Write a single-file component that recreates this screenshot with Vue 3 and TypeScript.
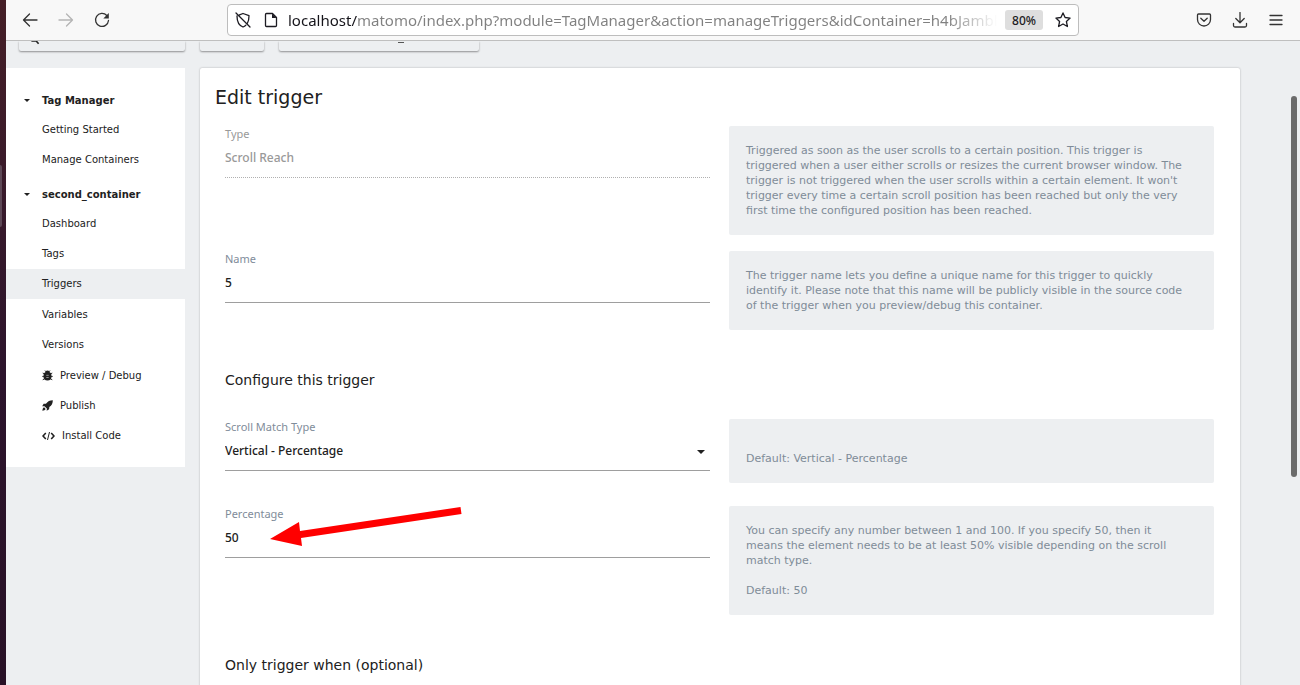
<script setup lang="ts">
import { ref } from 'vue'

interface MenuItem {
  label: string
  icon?: 'bug' | 'rocket' | 'code'
  active?: boolean
}

interface MenuGroup {
  title: string
  items: MenuItem[]
}

const groups: MenuGroup[] = [
  { title: 'Tag Manager', items: [{ label: 'Getting Started' }, { label: 'Manage Containers' }] },
  {
    title: 'second_container',
    items: [
      { label: 'Dashboard' },
      { label: 'Tags' },
      { label: 'Triggers', active: true },
      { label: 'Variables' },
      { label: 'Versions' },
      { label: 'Preview / Debug', icon: 'bug' },
      { label: 'Publish', icon: 'rocket' },
      { label: 'Install Code', icon: 'code' },
    ],
  },
]

const url = ref('localhost/matomo/index.php?module=TagManager&action=manageTriggers&idContainer=h4bJambk&')
const type = ref('Scroll Reach')
const name = ref('5')
const matchType = ref('Vertical - Percentage')
const percentage = ref('50')
</script>

<template>
  <div class="screen">
    <div class="dock"><span class="dock-mark"></span></div>
    <div class="browser">
      <header class="toolbar">
        <nav class="nav-buttons">
          <button type="button" aria-label="Back">
            <svg viewBox="0 0 16 16"><path d="M15 8H1.5M7.5 2 1.5 8l6 6" /></svg>
          </button>
          <button type="button" aria-label="Forward" class="dim">
            <svg viewBox="0 0 16 16"><path d="M1 8h13.500M8.500 2l6 6-6 6" /></svg>
          </button>
          <button type="button" aria-label="Reload">
            <svg viewBox="0 0 16 16">
              <path d="M12.800 3.500A6.500 6.500 0 1 0 14.500 8.500" />
              <path d="M14.800 1v5.500H9.300z" class="solid" />
            </svg>
          </button>
        </nav>
        <div class="address">
          <svg class="shield" viewBox="0 0 16 16">
            <path d="M4.500 2.800 8 1.500l6 2.200c0 3.500-.4 5.800-1.700 7.800M10.800 13.200C10 14 9 14.600 8 15c-4-1.500-6-5-6-11M1 1l14 14" />
          </svg>
          <svg class="doc" viewBox="0 0 16 16">
            <path d="M3.500 1.500h6l4 4v8q0 1-1 1h-9q-1 0-1-1v-11q0-1 1-1z" />
            <path d="M9 1.500v4.500h4.500z" class="solid" />
          </svg>
          <input v-model="url" class="url" type="text" aria-label="Address" spellcheck="false" />
          <button type="button" class="zoom">80%</button>
          <button type="button" class="star" aria-label="Bookmark">
            <svg viewBox="0 0 16 16">
              <path d="M8 .9l2.100 4.600 5 .6-3.700 3.400 1 5L8 12l-4.400 2.500 1-5L.9 6.100l5-.6z" />
            </svg>
          </button>
        </div>
        <div class="tools">
          <button type="button" aria-label="Save to Pocket">
            <svg viewBox="0 0 16 16">
              <path d="M2.500 2h11q1 0 1 1v4.500a6.500 6.500 0 0 1-13 0V3q0-1 1-1zM4.800 6.200 8 9.300l3.200-3.100" />
            </svg>
          </button>
          <button type="button" aria-label="Downloads">
            <svg viewBox="0 0 16 16"><path d="M8 .5v10M3.800 6.500 8 10.700l4.200-4.200M1.500 11.500v2q0 1.500 1.500 1.500h10q1.500 0 1.500-1.500v-2" /></svg>
          </button>
          <button type="button" aria-label="Menu">
            <svg viewBox="0 0 16 16"><path d="M2 3.500h12M2 8h12M2 12.500h12" /></svg>
          </button>
        </div>
      </header>

      <div class="viewport">
        <div class="chips">
          <div class="chip chip-search">
            <svg viewBox="0 0 12 5"><path d="M1.500 0h6l3 3.500" /></svg>
          </div>
          <div class="chip chip-date"></div>
          <div class="chip chip-site"><span class="tail"></span></div>
        </div>

        <div class="columns">
          <nav class="menu">
            <section v-for="group in groups" :key="group.title" class="group">
              <button type="button" class="group-title"><i class="caret"></i>{{ group.title }}</button>
              <ul :class="{ long: group.items.length > 2 }">
                <li v-for="item in group.items" :key="item.label" :class="{ active: item.active }">
                  <a href="#">
                    <svg v-if="item.icon === 'bug'" class="ico" viewBox="0 0 12 12">
                      <path d="M3.300.6l1.400 1.400M8.700.6 7.300 2M.8 3.300l2 1M11.200 3.300l-2 1M.3 7h11.400M.8 10.700l2-1M11.200 10.700l-2-1" class="thin" />
                      <path d="M3.300 3a2.700 2.500 0 0 1 5.400 0h.8q.9 1.500.9 4a4.400 4.400 0 0 1-8.800 0q0-2.500.9-4z" />
                      <path d="M4.700 5.800h2.600M4.700 8.200h2.600" class="gap" />
                    </svg>
                    <svg v-if="item.icon === 'rocket'" class="ico" viewBox="0 0 12 12">
                      <path d="M11.800.2C8.500.2 6.300 1.300 4.300 4L1.800 4.200.2 6.900l2.500-.2 2.600 2.600-.2 2.500 2.700-1.600.2-2.500C10.700 5.700 11.800 3.500 11.800.2zM2.300 8C1 8.700.6 9.800.4 11.600 2.200 11.400 3.300 11 4 9.700z" />
                    </svg>
                    <svg v-if="item.icon === 'code'" class="ico code" viewBox="0 0 13 10">
                      <path d="M3.800 2 1 5l2.800 3M9.200 2 12 5 9.200 8" class="bold" />
                      <path d="M7.500 1l-2 8" class="thin" />
                    </svg>
                    {{ item.label }}
                  </a>
                </li>
              </ul>
            </section>
          </nav>

          <main class="card">
            <h1>Edit trigger</h1>
            <form @submit.prevent>
              <div class="row">
                <div class="field disabled">
                  <label for="type">Type</label>
                  <input id="type" v-model="type" type="text" disabled />
                </div>
                <p class="help">
                  Triggered as soon as the user scrolls to a certain position. This trigger is triggered when a user
                  either scrolls or resizes the current browser window. The trigger is not triggered when the user
                  scrolls within a certain element. It won't trigger every time a certain scroll position has been
                  reached but only the very first time the configured position has been reached.
                </p>
              </div>
              <div class="row">
                <div class="field">
                  <label for="name">Name</label>
                  <input id="name" v-model="name" type="text" />
                </div>
                <p class="help">
                  The trigger name lets you define a unique name for this trigger to quickly identify it. Please note
                  that this name will be publicly visible in the source code of the trigger when you preview/debug this
                  container.
                </p>
              </div>

              <h2>Configure this trigger</h2>
              <div class="row">
                <div class="field">
                  <label for="match">Scroll Match Type</label>
                  <div class="select">
                    <select id="match" v-model="matchType">
                      <option>Vertical - Percentage</option>
                    </select>
                    <i class="arrow"></i>
                  </div>
                </div>
                <p class="help"><br />Default: Vertical - Percentage</p>
              </div>
              <div class="row spaced">
                <div class="field">
                  <label for="percentage">Percentage</label>
                  <input id="percentage" v-model="percentage" type="text" />
                  <svg class="pointer" viewBox="0 0 192 40" aria-hidden="true">
                    <path d="M0 33 29 16l1 9L190.500 1l1 7L31 32l1 8z" />
                  </svg>
                </div>
                <p class="help">
                  You can specify any number between 1 and 100. If you specify 50, then it means the element needs to be
                  at least 50% visible depending on the scroll match type.<br /><br />Default: 50
                </p>
              </div>

              <h2>Only trigger when (optional)</h2>
            </form>
          </main>
        </div>
        <div class="scroll-thumb"></div>
      </div>
    </div>
  </div>
</template>

<style>
body {
  margin: 0;
  overflow: hidden;
}
</style>

<style scoped>
* {
  box-sizing: border-box;
}

.screen {
  display: flex;
  height: 100vh;
  overflow: hidden;
  background: #edeff1;
  color: #212121;
  font-family: 'DejaVu Sans', sans-serif;
  font-size: 11px;
}

button,
input,
select {
  margin: 0;
  padding: 0;
  border: 0;
  border-radius: 0;
  outline: 0;
  background: none;
  color: inherit;
  font: inherit;
  appearance: none;
}

.dock {
  flex: none;
  width: 6px;
  padding-top: 165px;
  background: linear-gradient(#451f27, #381a2b 30%, #2c142c 55%, #281126);
}

.dock-mark {
  display: block;
  width: 2px;
  height: 62px;
  border-radius: 0 2px 2px 0;
  background: #5d4856;
}

.browser {
  display: flex;
  flex: 1;
  flex-direction: column;
  min-width: 0;
}

.toolbar {
  display: flex;
  flex: none;
  align-items: center;
  height: 41px;
  padding: 0 16px;
  border-bottom: 1px solid #bfbfbf;
  background: #f8f8f8;
  color: #333;
}

.toolbar svg {
  display: block;
  width: 16px;
  height: 16px;
  fill: none;
  stroke: currentColor;
  stroke-width: 1.3;
  stroke-linecap: round;
  stroke-linejoin: round;
}

.toolbar svg .solid {
  fill: currentColor;
  stroke: none;
}

.nav-buttons,
.tools {
  display: flex;
  gap: 20px;
}

.dim {
  color: #b5b5b5;
}

.address {
  display: flex;
  flex: 1;
  align-items: center;
  max-width: 852px;
  height: 32px;
  margin-left: 117px;
  padding: 0 7px;
  border: 1px solid #bdbdbd;
  border-radius: 4px;
  background: #fff;
  color: #1c1b22;
}

.doc {
  margin-left: 12px;
}

.url {
  flex: 1;
  min-width: 0;
  height: 28px;
  margin: 0 8px 0 9px;
  background: linear-gradient(90deg, #15141a 69px, #808080 69px, #808080 calc(100% - 50px), transparent);
  background-clip: text;
  -webkit-text-fill-color: transparent;
  font-family: 'Noto Sans', sans-serif;
  font-size: 15px;
}

.zoom {
  width: 38px;
  height: 20px;
  border-radius: 3px;
  background: #dedede;
  font-family: 'Noto Sans', sans-serif;
  font-size: 12px;
  font-weight: 500;
}

.star {
  margin-left: 12px;
}

.tools {
  margin-left: auto;
}

.viewport {
  position: relative;
  flex: 1;
  min-height: 0;
  overflow: hidden;
}

.chips {
  display: flex;
  gap: 15px;
  padding: 0 13px;
}

.chip {
  height: 10px;
  border-radius: 0 0 2px 2px;
  box-shadow: 0 1px 2px rgba(0, 0, 0, 0.4);
}

.chip-search {
  width: 166px;
  padding-left: 10px;
}

.chip-search svg {
  display: block;
  width: 12px;
  height: 4px;
  fill: none;
  stroke: #222;
  stroke-width: 2;
}

.chip-date {
  width: 64px;
}

.chip-site {
  width: 200px;
  padding-left: 119px;
}

.tail {
  display: block;
  width: 6px;
  height: 2px;
  border-bottom: 1px solid #555;
}

.columns {
  display: grid;
  grid-template-columns: 179px minmax(0, 1fr);
  gap: 15px;
  align-items: start;
  margin-top: 17px;
  padding-right: 60px;
}

.menu {
  padding: 18px 0 16px;
  background: #fff;
  font-size: 10px;
}

.group + .group {
  margin-top: 6px;
}

.group-title {
  display: flex;
  align-items: center;
  width: 100%;
  height: 28px;
  padding-left: 18px;
  font-weight: 700;
}

.caret {
  margin-right: 12px;
  border: 3px solid transparent;
  border-top-color: #212121;
  border-bottom: 0;
}

.menu ul {
  display: grid;
  grid-auto-rows: 1fr;
  min-height: 60px;
  margin: 0;
  padding: 0;
  list-style: none;
}

.menu ul.long {
  min-height: 243px;
}

.menu li.active {
  background: #edeff1;
}

.menu a {
  display: flex;
  align-items: center;
  height: 100%;
  padding-left: 36px;
  color: #212121;
  text-decoration: none;
}

.ico {
  width: 11px;
  height: 11px;
  margin-right: 7px;
  fill: #212121;
}

.ico.code {
  width: 13px;
  height: 10px;
}

.ico .thin,
.ico .bold,
.ico .gap {
  fill: none;
  stroke: #212121;
  stroke-width: 1;
}

.ico .bold {
  stroke-width: 1.6;
}

.ico .gap {
  stroke: #bbb;
  stroke-width: 0.8;
}

.card {
  min-height: 640px;
  padding: 16px 26px 16px 25px;
  border-radius: 2px;
  background: #fff;
  box-shadow: 0 0 2px rgba(0, 0, 0, 0.3);
}

h1 {
  margin: 0 0 16px -10px;
  font-size: 19px;
  font-weight: 400;
  line-height: 26px;
}

h2 {
  margin: 39px 0 28px;
  font-size: 14px;
  font-weight: 400;
  line-height: 22px;
}

.row {
  display: grid;
  grid-template-columns: 1fr 1fr;
  gap: 19px;
  margin-bottom: 16px;
}

.row.spaced {
  margin-top: 23px;
}

.field {
  position: relative;
  font-family: 'Noto Sans', sans-serif;
}

.field label {
  display: block;
  color: #7f8c9a;
  font-size: 11px;
  line-height: 16px;
}

.field input,
.field select {
  display: block;
  width: 100%;
  height: 36px;
  padding-bottom: 4px;
  border-bottom: 1px solid #9e9e9e;
  font-size: 12px;
  font-weight: 500;
}

.field.disabled label,
.field.disabled input {
  color: #999;
}

.field.disabled input {
  border-bottom: 1px dotted #b0b0b0;
}

.select {
  position: relative;
}

.arrow {
  position: absolute;
  top: 15px;
  right: 5px;
  border: 4px solid transparent;
  border-top-color: #212121;
  border-bottom: 0;
}

.pointer {
  position: absolute;
  top: 0;
  left: 45px;
  width: 192px;
  height: 40px;
  fill: #f00;
}

.help {
  margin: 0;
  padding: 17px 26px 17px 17px;
  border-radius: 2px;
  background: #edeff1;
  color: #7f8c98;
  line-height: 15px;
}

.scroll-thumb {
  position: absolute;
  top: 55px;
  right: 3px;
  width: 6px;
  height: 381px;
  border-radius: 3px;
  background: #6b6b6b;
}
</style>
